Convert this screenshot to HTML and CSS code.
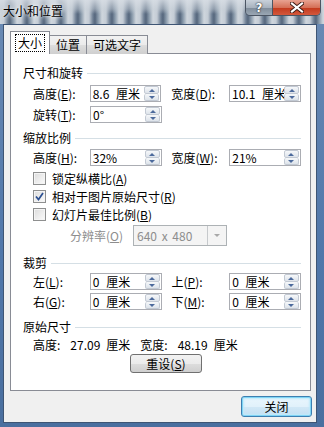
FILE: index.html
```html
<!DOCTYPE html>
<html lang="zh-CN">
<head>
    <meta charset="UTF-8">
    <title>大小和位置</title>
    <link rel="stylesheet" href="styles.css">
</head>
<body>
<div class="window">

    <!-- Title bar -->
    <div class="titlebar">
        <span class="title">大小和位置</span>
        <div class="caption-buttons">
            <span class="cap-btn help">?</span>
            <span class="cap-btn close">
                <svg width="14" height="11" viewBox="0 0 14 11">
                    <path d="M2 1.5 L12 9.5 M12 1.5 L2 9.5" stroke="#3a1a14" stroke-width="4" stroke-linecap="square"/>
                    <path d="M2 1.5 L12 9.5 M12 1.5 L2 9.5" stroke="#fff" stroke-width="2.2" stroke-linecap="square"/>
                </svg>
            </span>
        </div>
    </div>

    <!-- Client area -->
    <div class="client">
        <div class="tabs">
            <span class="tab active"><span class="focus">大小</span></span>
            <span class="tab tab-pos">位置</span>
            <span class="tab tab-alt">可选文字</span>
        </div>

        <div class="panel">
            <div class="group-title"><span>尺寸和旋转</span><i></i></div>
            <div class="field-row row-1">
                <label class="lbl">高度(<u>E</u>):</label>
                <div class="spin"><span class="val">8.6 厘米</span><span class="arrows"><i class="up"></i><i class="down"></i></span></div>
                <label class="lbl lbl-2">宽度(<u>D</u>):</label>
                <div class="spin"><span class="val">10.1 厘米</span><span class="arrows"><i class="up"></i><i class="down"></i></span></div>
            </div>
            <div class="field-row row-2">
                <label class="lbl">旋转(<u>T</u>):</label>
                <div class="spin"><span class="val">0°</span><span class="arrows"><i class="up"></i><i class="down"></i></span></div>
            </div>

            <div class="group-title g-2"><span>缩放比例</span><i></i></div>
            <div class="field-row row-3">
                <label class="lbl">高度(<u>H</u>):</label>
                <div class="spin"><span class="val">32%</span><span class="arrows"><i class="up"></i><i class="down"></i></span></div>
                <label class="lbl lbl-2">宽度(<u>W</u>):</label>
                <div class="spin"><span class="val">21%</span><span class="arrows"><i class="up"></i><i class="down"></i></span></div>
            </div>
            <div class="check-row first"><span class="box"></span>锁定纵横比(<u>A</u>)</div>
            <div class="check-row"><span class="box checked">
                <svg width="9" height="9" viewBox="0 0 9 9"><path d="M1 4.5 L3.5 7.5 L8 1" fill="none" stroke="#2b4f91" stroke-width="1.7"/></svg>
            </span>相对于图片原始尺寸(<u>R</u>)</div>
            <div class="check-row"><span class="box"></span>幻灯片最佳比例(<u>B</u>)</div>
            <div class="res-row">
                <label class="lbl-dis">分辨率(<u>O</u>)</label>
                <div class="combo"><span class="val">640 x 480</span><span class="drop"><i></i></span></div>
            </div>

            <div class="group-title g-3"><span>裁剪</span><i></i></div>
            <div class="field-row row-4">
                <label class="lbl">左(<u>L</u>):</label>
                <div class="spin"><span class="val">0 厘米</span><span class="arrows"><i class="up"></i><i class="down"></i></span></div>
                <label class="lbl lbl-2">上(<u>P</u>):</label>
                <div class="spin"><span class="val">0 厘米</span><span class="arrows"><i class="up"></i><i class="down"></i></span></div>
            </div>
            <div class="field-row row-5">
                <label class="lbl">右(<u>G</u>):</label>
                <div class="spin"><span class="val">0 厘米</span><span class="arrows"><i class="up"></i><i class="down"></i></span></div>
                <label class="lbl lbl-2">下(<u>M</u>):</label>
                <div class="spin"><span class="val">0 厘米</span><span class="arrows"><i class="up"></i><i class="down"></i></span></div>
            </div>

            <div class="group-title g-4"><span>原始尺寸</span><i></i></div>
            <div class="orig">
                <span>高度:</span><span class="num">27.09</span><span class="unit">厘米</span>
                <span class="w">宽度:</span><span class="num">48.19</span><span class="unit">厘米</span>
            </div>
            <button class="btn reset">重设(<u>S</u>)</button>
        </div>

        <div class="footer">
            <button class="btn default">关闭</button>
        </div>
    </div>
</div>
</body>
</html>
```

FILE: styles.css
```css
/* General */
body {
    margin: 0;
    padding: 0;
    font-family: "Noto Sans CJK SC", "Liberation Sans", sans-serif;
    font-size: 12px;
    color: #000;
}

u {
    text-decoration: underline;
    text-underline-offset: 1px;
}

.window {
    position: relative;
    width: 324px;
    height: 427px;
    display: flex;
    flex-direction: column;
    overflow: hidden;
    background: linear-gradient(to bottom, #6b8bb4, #5077aa 60%, #4a6f9f);
}

/* Title bar */
.titlebar {
    height: 24px;
    display: flex;
    justify-content: space-between;
    align-items: flex-start;
    background:
        linear-gradient(to bottom, rgba(215, 221, 228, 0.85) 0, rgba(200, 208, 216, 0.5) 9px, rgba(200, 208, 216, 0) 14px),
        repeating-linear-gradient(90deg, #cfd6dd 0, #c4ccd5 4px, #6c7d92 8px, #55667c 10px, #8798a9 13px, #cfd6dd 17px);
}

.title {
    padding: 3px 0 0 3px;
    line-height: 16px;
    text-shadow: 0 0 6px rgba(255, 255, 255, 0.9), 0 0 3px rgba(255, 255, 255, 0.9);
}

.caption-buttons {
    display: flex;
    margin-right: 3px;
    border: 1px solid #4b5563;
    border-top: none;
    border-radius: 0 0 5px 5px;
    overflow: hidden;
}

.cap-btn {
    height: 15px;
    display: flex;
    align-items: center;
    justify-content: center;
}

.cap-btn.help {
    width: 26px;
    border-right: 1px solid #4b5563;
    background: linear-gradient(to bottom, #c9d1da, #a8b3bf 50%, #7e8b99 51%, #9aa7b4);
    color: #fff;
    font-family: "DejaVu Sans", sans-serif;
    font-weight: bold;
    font-size: 12px;
    text-shadow: 0 0 2px #222, 0 0 1px #222;
}

.cap-btn.close {
    width: 47px;
    background: linear-gradient(to bottom, #e8a291, #d57058 50%, #c2381c 51%, #d4583c);
}

/* Client area */
.client {
    flex: 1;
    margin: 0 7px 4px 3px;
    background: #f0f0f0;
    border: 1px solid #3e5574;
    display: flex;
    flex-direction: column;
    padding: 7px 0 0 6px;
}

.tabs {
    display: flex;
    align-items: flex-end;
    height: 22px;
    margin-bottom: -1px;
    position: relative;
    z-index: 1;
}

.tab {
    height: 18px;
    line-height: 18px;
    border: 1px solid #898c95;
    border-bottom: none;
    background: linear-gradient(to bottom, #f2f2f2, #ebebeb 50%, #dddddd 51%, #cfcfcf);
    text-align: center;
    margin-left: -1px;
}

.tab.active {
    width: 38px;
    height: 22px;
    margin-left: 0;
    background: #fff;
    display: flex;
    align-items: center;
    justify-content: center;
}

.tab .focus {
    border: 1px dotted #000;
    padding: 0 2px;
    line-height: 16px;
}

.tab-pos {
    width: 36px;
}

.tab-alt {
    width: 60px;
}

/* Panel */
.panel {
    width: 301px;
    height: 338px;
    box-sizing: border-box;
    border: 1px solid #898c95;
    background: #fff;
    padding: 11px 9px 0 12px;
}

.group-title {
    display: flex;
    align-items: center;
    height: 16px;
    line-height: 16px;
}

.group-title i {
    flex: 1;
    height: 1px;
    margin-left: 4px;
    background: #d5dfe5;
}

.g-2 { margin-top: 7px; }
.g-3 { margin-top: 9px; }
.g-4 { margin-top: 9px; }

/* Rows with spinners */
.field-row {
    display: flex;
    align-items: center;
    margin-left: 10px;
    height: 17px;
}

.row-1 { margin-top: 4px; }
.row-2 { margin-top: 4px; }
.row-3 { margin-top: 3px; }
.row-4 { margin-top: 2px; }
.row-5 { margin-top: 3px; }

.lbl {
    width: 57px;
}

.lbl-2 {
    margin-left: 10px;
    width: 58px;
}

.spin {
    width: 72px;
    height: 17px;
    box-sizing: border-box;
    border: 1px solid #abadb3;
    background: #fff;
    display: flex;
    align-items: stretch;
}

.spin .val {
    flex: 1;
    overflow: hidden;
    white-space: nowrap;
    padding-left: 2px;
    line-height: 15px;
    word-spacing: 4px;
}

.arrows {
    width: 15px;
    display: flex;
    flex-direction: column;
    padding: 0 1px 0 0;
}

.arrows i {
    flex: 1;
    display: flex;
    align-items: center;
    justify-content: center;
    background: linear-gradient(to bottom, #f6f8fa, #dde3ea);
    border: 1px solid #c2c9d3;
    border-radius: 2px;
}

.arrows i + i {
    border-top: none;
}

.arrows .up::before {
    content: "";
    border-left: 3px solid transparent;
    border-right: 3px solid transparent;
    border-bottom: 3px solid #4c6a9c;
}

.arrows .down::before {
    content: "";
    border-left: 3px solid transparent;
    border-right: 3px solid transparent;
    border-top: 3px solid #4c6a9c;
}

/* Checkboxes */
.check-row {
    display: flex;
    align-items: center;
    height: 18px;
    margin-left: 10px;
}

.check-row.first {
    margin-top: 3px;
}

.box {
    width: 13px;
    height: 13px;
    box-sizing: border-box;
    border: 1px solid #8e8f8f;
    background: linear-gradient(135deg, #dcdcdc, #fbfbfb);
    box-shadow: inset 0 0 0 1px #f4f4f4;
    margin-right: 6px;
    display: flex;
    align-items: center;
    justify-content: center;
}

/* Resolution combo (disabled) */
.res-row {
    display: flex;
    align-items: center;
    margin-top: 2px;
    margin-left: 47px;
    height: 21px;
}

.lbl-dis {
    color: #8d8d8d;
    width: 63px;
}

.combo {
    width: 94px;
    height: 21px;
    box-sizing: border-box;
    border: 1px solid #adb2b5;
    background: #f4f4f4;
    display: flex;
}

.combo .val {
    flex: 1;
    color: #8d8d8d;
    padding-left: 3px;
    line-height: 19px;
    word-spacing: 2px;
}

.combo .drop {
    width: 18px;
    border-left: 1px solid #c6c9cc;
    display: flex;
    align-items: center;
    justify-content: center;
}

.combo .drop i {
    border-left: 3px solid transparent;
    border-right: 3px solid transparent;
    border-top: 3px solid #a8a8a8;
}

/* Original size */
.orig {
    margin: 2px 0 0 10px;
    height: 16px;
    line-height: 16px;
    display: flex;
}

.orig .num {
    margin-left: 10px;
}

.orig .unit {
    margin-left: 6px;
}

.orig .w {
    margin-left: 10px;
}

/* Buttons */
.btn {
    font-family: inherit;
    font-size: 12px;
    color: #000;
    border: 1px solid #707070;
    border-radius: 3px;
    background: linear-gradient(to bottom, #f2f2f2, #ebebeb 50%, #dddddd 51%, #cfcfcf);
    padding: 0;
    line-height: 17px;
}

.reset {
    display: block;
    width: 72px;
    height: 19px;
    margin: 1px 0 0 107px;
}

.footer {
    display: flex;
    justify-content: flex-end;
    padding: 5px 4px 0 0;
}

.btn.default {
    width: 71px;
    height: 21px;
    border-color: #3c7fb1;
    box-shadow: inset 0 0 0 1px #7fd4f5, inset 0 0 2px 2px #bfe9fa;
    background: linear-gradient(to bottom, #eaf6fd, #e1f1fb 50%, #d1e8f6 51%, #c3dff2);
}
```
